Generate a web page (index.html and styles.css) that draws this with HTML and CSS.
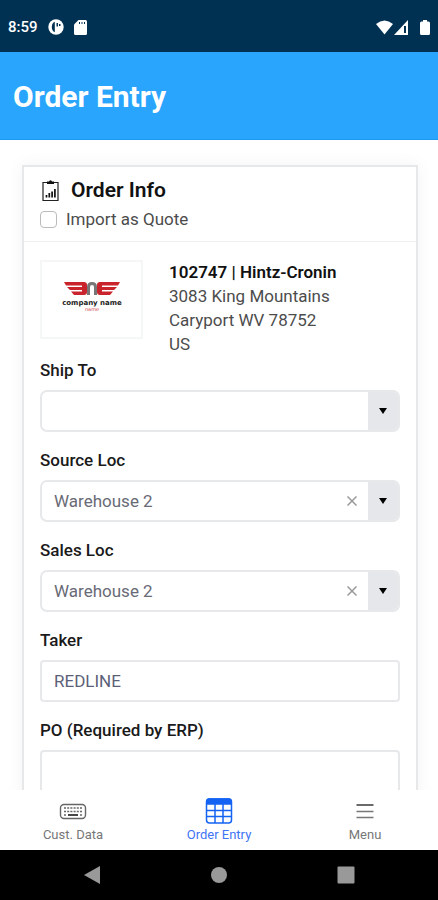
FILE: index.html
```html
<!DOCTYPE html>
<html lang="en">
<head>
<meta charset="utf-8">
<meta name="viewport" content="width=device-width, initial-scale=1">
<title>Order Entry</title>
<link rel="stylesheet" href="styles.css">
</head>
<body>
<div class="status">
  <span class="clock">8:59</span>
  <svg width="16" height="16" viewBox="0 0 16 16"><circle cx="8" cy="8" r="7.700" fill="#fff"/><path d="M6.800 2.800Q3.800 4 3.800 8T6.800 13.200Z" fill="#003153"/><path d="M8.500 4H10V7.500H8.500ZM11 5H12.500V7H11Z" fill="#003153"/></svg>
  <svg width="13" height="15" viewBox="0 0 13 15"><path d="M4.500 0H11.500Q13 0 13 1.500V13.500Q13 15 11.500 15H1.500Q0 15 0 13.500V4.500Z" fill="#fff"/><path d="M5.500 2V4M8 2V4M10.500 2V4" stroke="#003153"/></svg>
  <span class="spacer"></span>
  <svg width="34" height="15" viewBox="0 0 34 15"><path d="M0 4Q8.500-3 17 4L8.500 14.500Z" fill="#fff"/><path d="M32 0V15H18Z" fill="#fff"/><path d="M29 6V13" stroke="#003153" stroke-width="2"/></svg>
  <svg width="10" height="15" viewBox="0 0 10 15"><path d="M3 0H7V1.500H8.500Q10 1.500 10 3V13.500Q10 15 8.500 15H1.500Q0 15 0 13.500V3Q0 1.500 1.500 1.500H3Z" fill="#fff"/></svg>
</div>
<header class="titlebar"><h1>Order Entry</h1></header>
<main class="content">
  <form class="card">
    <div class="card-head">
      <h2>
        <svg width="17" height="21" viewBox="0 0 17 21"><path d="M5 2.500H1V20.500H16V2.500H12" fill="none" stroke="#222" stroke-width="1.200"/><path d="M5 1.500H7Q8.500-.8 10 1.500H12V4H5Z" fill="#111"/><path d="M4.500 15V17.500M7.300 13V17.500M10.100 11.500V17.500M12.900 9V17.500" stroke="#111" stroke-width="1.700"/></svg>
        Order Info
      </h2>
      <label class="check"><input type="checkbox"> Import as Quote</label>
    </div>
    <div class="card-body">
      <div class="customer">
        <div class="logo">
          <svg width="64" height="34" viewBox="0 0 64 34" role="img" aria-label="Company logo">
            <g transform="translate(3 0)">
            <path d="M1 1H21Q24 1 24 4V11Q24 14 21 14H11L8 10.500H19V9H7L4 6H19V4.500H3Z" fill="#c9232b"/>
            <path d="M57 1H37Q34 1 34 4V11Q34 14 37 14H47L50 10.500H39V9H51L54 6H39V4.500H55Z" fill="#c9232b"/>
            <path d="M25.500 14V6Q25.500 2.500 29 2.500Q32.500 2.500 32.500 6V14" fill="none" stroke="#777" stroke-width="3"/>
            </g>
            <text x="32" y="24" class="logo-name">company name</text>
            <text x="32" y="30" class="logo-tag">name</text>
          </svg>
        </div>
        <address><strong>102747 | Hintz-Cronin</strong><br>3083 King Mountains<br>Caryport WV 78752<br>US</address>
      </div>
      <div class="field">
        <label for="ship">Ship To</label>
        <div class="combo">
          <select id="ship"><option></option></select>
          <button type="button" class="arrow" aria-label="Open Ship To"><svg width="8" height="6" viewBox="0 0 8 6"><path d="M0 0H8L4 6Z"/></svg></button>
        </div>
      </div>
      <div class="field">
        <label for="source">Source Loc</label>
        <div class="combo">
          <select id="source"><option>Warehouse 2</option></select>
          <button type="button" class="clear" aria-label="Clear Source Loc"><svg width="10" height="10" viewBox="0 0 10 10"><path d="M.5.5L9.500 9.500M9.500.5L.5 9.500"/></svg></button>
          <button type="button" class="arrow" aria-label="Open Source Loc"><svg width="8" height="6" viewBox="0 0 8 6"><path d="M0 0H8L4 6Z"/></svg></button>
        </div>
      </div>
      <div class="field">
        <label for="sales">Sales Loc</label>
        <div class="combo">
          <select id="sales"><option>Warehouse 2</option></select>
          <button type="button" class="clear" aria-label="Clear Sales Loc"><svg width="10" height="10" viewBox="0 0 10 10"><path d="M.5.5L9.500 9.500M9.500.5L.5 9.500"/></svg></button>
          <button type="button" class="arrow" aria-label="Open Sales Loc"><svg width="8" height="6" viewBox="0 0 8 6"><path d="M0 0H8L4 6Z"/></svg></button>
        </div>
      </div>
      <div class="field">
        <label for="taker">Taker</label>
        <input class="text" id="taker" type="text" value="REDLINE">
      </div>
      <div class="field">
        <label for="po">PO (Required by ERP)</label>
        <textarea class="text" id="po" rows="3"></textarea>
      </div>
    </div>
  </form>
</main>
<nav class="tabs">
  <a href="#data">
    <svg width="28" height="26" viewBox="0 0 28 26" fill="none" stroke="#666"><rect x="1.500" y="6.500" width="25" height="14" rx="3.500" stroke-width="1.400"/><path d="M5 10H23M5 13.500H23" stroke-width="1.600" stroke-dasharray="2 1.200"/><path d="M5 17H7M21 17H23" stroke-width="1.600"/><path d="M9 17H19" stroke="#333" stroke-width="1.800"/></svg>
    Cust. Data
  </a>
  <a href="#order" class="active" aria-current="page">
    <svg width="28" height="26" viewBox="0 0 28 26" fill="none" stroke="#1463f3" stroke-width="1.500"><rect x="1.500" y="1" width="25" height="24" rx="3"/><path d="M2 6V3Q2 1 4 1H24Q26 1 26 3V6Z" fill="#1463f3"/><path d="M1.500 12.500H26.500M1.500 18.500H26.500M10 6V25M18 6V25"/></svg>
    Order Entry
  </a>
  <a href="#menu">
    <svg width="28" height="26" viewBox="0 0 28 26" fill="none" stroke="#777" stroke-width="1.600"><path d="M5.500 7H22.500" stroke="#444"/><path d="M5.500 13.500H22.500M5.500 19.500H22.500"/></svg>
    Menu
  </a>
</nav>
<div class="system">
  <button type="button" aria-label="Back"><svg width="18" height="20" viewBox="0 0 18 20"><path d="M17 1V19L1 10Z"/></svg></button>
  <button type="button" aria-label="Home"><svg width="18" height="18" viewBox="0 0 18 18"><circle cx="9" cy="9" r="8"/></svg></button>
  <button type="button" aria-label="Recents"><svg width="18" height="18" viewBox="0 0 18 18"><rect x=".5" y=".5" width="17" height="17" rx="1"/></svg></button>
</div>
</body>
</html>
```
FILE: styles.css
```css
* {
  box-sizing: border-box;
}

body {
  margin: 0;
  height: 100vh;
  display: flex;
  flex-direction: column;
  background: #fff;
  color: #4c4c4c;
  font: 17px/24px Roboto, "Liberation Sans", sans-serif;
}

svg {
  flex: none;
  display: block;
}

.status {
  flex: none;
  display: flex;
  align-items: center;
  gap: 10px;
  height: 52px;
  padding: 2px 8px 0;
  background: #003153;
  color: #fff;
}

.clock {
  font-size: 15px;
  font-weight: 500;
}

.spacer {
  flex: 1;
}

.titlebar {
  flex: none;
  height: 88px;
  padding: 3px 13px 0;
  display: flex;
  align-items: center;
  background: #29a5fd;
  border-bottom: 1px solid #1c98ee;
  color: #fff;
}

h1 {
  margin: 0;
  font-size: 30px;
  font-weight: 700;
}

.content {
  flex: 1;
  min-height: 0;
  overflow: hidden;
  padding: 25px 20px 0 22px;
}

.card {
  border: 2px solid #e6e8e9;
  box-shadow: 0 0 16px rgba(0, 0, 0, 0.05);
}

.card-head {
  padding: 11px 16px 10px;
  border-bottom: 1px solid #f0f0f0;
}

h2 {
  display: flex;
  align-items: center;
  gap: 12px;
  margin: 0 0 4px;
  padding-left: 2px;
  color: #111;
  font-size: 21px;
  line-height: 25px;
  font-weight: 600;
}

.check {
  display: flex;
  align-items: center;
  gap: 9px;
}

.check input {
  appearance: none;
  margin: 0;
  width: 17px;
  height: 17px;
  border: 1px solid #bbb;
  border-radius: 4px;
}

.card-body {
  padding: 18px 16px;
}

.customer {
  display: flex;
  align-items: flex-start;
  gap: 26px;
  margin-bottom: 2px;
}

.logo {
  display: flex;
  justify-content: center;
  width: 103px;
  height: 79px;
  padding-top: 19px;
  border: 2px solid #f5f6f6;
}

.logo-name {
  fill: #222;
  font: 700 7px "DejaVu Sans", sans-serif;
  text-anchor: middle;
}

.logo-tag {
  fill: #d34a50;
  font: 5px "DejaVu Sans", sans-serif;
  text-anchor: middle;
}

address {
  font-style: normal;
}

strong {
  color: #111;
  font-weight: 600;
}

.field {
  margin-bottom: 16px;
}

.field label {
  display: block;
  margin-bottom: 8px;
  color: #1a1a1a;
  font-weight: 500;
}

.combo,
.text {
  width: 100%;
  height: 42px;
  border: 2px solid #e6e8ea;
  border-radius: 7px;
  background: #fff;
}

.combo {
  display: flex;
  overflow: hidden;
}

.text {
  display: block;
  padding: 0 12px;
  border-radius: 4px;
  color: #5c5f78;
  font: inherit;
}

textarea.text {
  height: 84px;
  padding: 8px 12px;
  resize: none;
}

select {
  appearance: none;
  flex: 1;
  min-width: 0;
  padding: 0 12px;
  border: 0;
  background: none;
  color: #686a76;
  font: inherit;
}

button {
  display: flex;
  align-items: center;
  justify-content: center;
  padding: 0;
  border: 0;
  background: none;
}

.clear {
  width: 32px;
  stroke: #999;
  stroke-width: 1.5;
}

.arrow {
  width: 30px;
  background: #e5e7ea;
}

.tabs {
  flex: none;
  display: grid;
  grid-template-columns: repeat(3, 1fr);
  height: 60px;
  padding-top: 8px;
  background: #fff;
}

.tabs a {
  display: flex;
  flex-direction: column;
  align-items: center;
  gap: 3px;
  color: #777;
  font-size: 13px;
  line-height: 16px;
  text-decoration: none;
}

.tabs .active {
  color: #3f74f5;
}

.system {
  flex: none;
  display: grid;
  grid-template-columns: repeat(3, 127px);
  justify-content: center;
  height: 50px;
  background: #000;
  fill: #999;
}
```
